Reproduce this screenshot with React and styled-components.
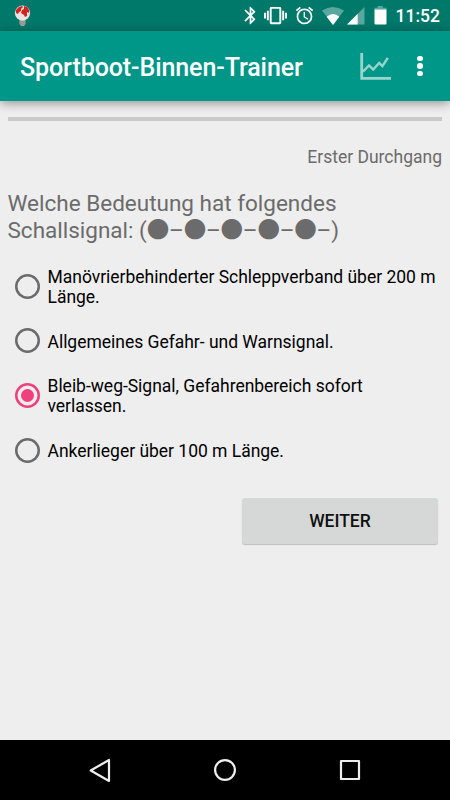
import React from 'react';
import styled, { createGlobalStyle } from 'styled-components';
import { MdBluetooth, MdVibration, MdAlarm } from 'react-icons/md';

const answers = [
  'Manövrierbehinderter Schleppverband über 200 m Länge.',
  'Allgemeines Gefahr- und Warnsignal.',
  'Bleib-weg-Signal, Gefahrenbereich sofort verlassen.',
  'Ankerlieger über 100 m Länge.',
];

const BulbIcon = () => (
  <svg width="18" height="22" viewBox="0 0 18 22">
    <path d="M5.5 14h6v5l-1.5 2H7l-1.500-2z" fill="#a9aaa7" />
    <path d="M6 17h5M6 19h5" stroke="#7d8582" strokeWidth="0.8" />
    <circle cx="8.5" cy="8" r="7.6" fill="#e9e4e2" />
    <path
      d="M2 5 5 2l3-1 1 1-2 2v2L5 7 4 9 2 8zM10 1l3 1 2 3v3l-2-1v4l-2 1-1-2-3-2 1-3 2-1z"
      fill="#d3221f"
    />
  </svg>
);

const WifiIcon = () => (
  <svg width="22" height="18" viewBox="0 0 22 18">
    <path d="M0 3.5Q11-3.5 22 3.5L11 18z" fill="#fff" opacity="0.35" />
    <path d="M4.7 9.7Q11 4.2 17.3 9.7L11 18z" fill="#fff" />
  </svg>
);

const SignalIcon = () => (
  <svg width="18" height="18" viewBox="0 0 18 18">
    <path d="M17.5 0v17.5H0z" fill="#fff" opacity="0.35" />
    <path d="M10.7 6.8v10.7H0z" fill="#fff" />
  </svg>
);

const BatteryIcon = () => (
  <svg width="13" height="19" viewBox="0 0 13 19">
    <path d="M3.7 0h5v1.8H12.5v2H.5v-2h3.2z" fill="#fff" opacity="0.35" />
    <path d="M.5 3.6h12v14a1 1 0 0 1-1 1h-10a1 1 0 0 1-1-1z" fill="#fff" />
  </svg>
);

const ChartIcon = () => (
  <svg width="32" height="28" viewBox="0 0 32 28" fill="none" stroke="#99d5cf">
    <path d="M1.7 0v25.3H31" strokeWidth="2.8" />
    <path d="m3 18.6 6-6.2 4.2 4.2 6-6.6 3.2 3.2 5.4-8.4" strokeWidth="2.4" />
  </svg>
);

export default function App() {
  const [selected, setSelected] = React.useState(2);

  return (
    <Screen>
      <GlobalStyle />
      <StatusBar>
        <BulbIcon />
        <StatusIcons>
          <MdBluetooth size={21} />
          <MdVibration size={23} />
          <MdAlarm size={21} />
          <WifiIcon />
          <SignalIcon />
          <BatteryIcon />
        </StatusIcons>
        <Clock>11:52</Clock>
      </StatusBar>

      <Toolbar>
        <h1>Sportboot-Binnen-Trainer</h1>
        <ChartIcon />
        <MenuDots>
          <i />
          <i />
          <i />
        </MenuDots>
      </Toolbar>

      <Content>
        <Progress />
        <Round>Erster Durchgang</Round>
        <Question>
          Welche Bedeutung hat folgendes
          <br />
          Schallsignal: (<Signal>●–●–●–●–●–</Signal>)
        </Question>
        <Answers>
          {answers.map((answer, index) => (
            <Answer key={answer} onClick={() => setSelected(index)}>
              <Radio $checked={index === selected} />
              <span>{answer}</span>
            </Answer>
          ))}
        </Answers>
        <NextButton type="button">WEITER</NextButton>
      </Content>

      <NavBar>
        <svg width="22" height="25" viewBox="0 0 22 25">
          <path d="M20 2v21L1.7 12.5z" />
        </svg>
        <svg width="24" height="24" viewBox="0 0 24 24">
          <circle cx="12" cy="12" r="9.9" />
        </svg>
        <svg width="22" height="22" viewBox="0 0 22 22">
          <rect x="2" y="2" width="18" height="18" />
        </svg>
      </NavBar>
    </Screen>
  );
}

const GlobalStyle = createGlobalStyle`
  * {
    box-sizing: border-box;
  }
  body {
    margin: 0;
    font-family: Roboto, 'Noto Sans CJK SC', sans-serif;
  }
`;

const Screen = styled.div`
  display: flex;
  flex-direction: column;
  width: 450px;
  height: 800px;
  overflow: hidden;
  background: #eee;
`;

const StatusBar = styled.header`
  display: flex;
  align-items: center;
  flex: none;
  height: 31px;
  padding: 0 10px 0 14px;
  background: #00786a;
  color: #fff;
`;

const StatusIcons = styled.div`
  display: flex;
  align-items: center;
  margin-left: auto;
  svg:nth-child(2) {
    margin-left: 3px;
  }
  svg:nth-child(3) {
    margin-left: 7px;
  }
  svg:nth-child(4) {
    margin-left: 7px;
  }
  svg:nth-child(5) {
    margin-left: 3px;
  }
  svg:nth-child(6) {
    margin-left: 9px;
  }
`;

const Clock = styled.span`
  margin-left: 9px;
  padding-top: 2px;
  font-size: 17.5px;
  font-weight: 500;
  line-height: 31px;
`;

const Toolbar = styled.div`
  display: flex;
  align-items: center;
  flex: none;
  height: 70px;
  padding: 2px 27px 0 20px;
  background: #009788;
  box-shadow: 0 2px 10px rgba(0, 0, 0, 0.4);
  h1 {
    flex: 1;
    margin: 0;
    color: #fff;
    font-size: 25px;
    font-weight: 500;
    letter-spacing: -0.09px;
  }
`;

const MenuDots = styled.div`
  display: flex;
  flex-direction: column;
  gap: 2px;
  margin: -2px 0 0 25px;
  i {
    width: 5.6px;
    height: 5.6px;
    border-radius: 50%;
    background: #fff;
  }
`;

const Content = styled.main`
  display: flex;
  flex-direction: column;
  flex: 1;
  padding: 16px 8px 0 7.5px;
`;

const Progress = styled.div`
  height: 4px;
  background: #c9c9c9;
`;

const Round = styled.p`
  margin: 26px 0 0;
  color: #6b6b6b;
  font-size: 17.5px;
  line-height: 21px;
  text-align: right;
`;

const Question = styled.h2`
  margin: 22px 0 0;
  color: #6b6b6b;
  font-size: 22.5px;
  font-weight: 400;
  line-height: 27px;
`;

const Signal = styled.span`
  letter-spacing: -0.2px;
  white-space: nowrap;
`;

const Answers = styled.div`
  margin-top: 15.5px;
`;

const Answer = styled.div`
  display: flex;
  align-items: center;
  height: 54.6px;
  padding-left: 7px;
  color: #000;
  font-size: 17.5px;
  letter-spacing: -0.02px;
  line-height: 20px;
  cursor: pointer;
  span:last-child {
    padding-top: 0.4px;
  }
`;

const Radio = styled.span`
  display: grid;
  place-items: center;
  flex: none;
  width: 25px;
  height: 25px;
  margin: -1px 8px 0 0;
  border-radius: 50%;
  box-shadow: inset 0 0 0 2.5px ${({ $checked }) => ($checked ? '#f0407c' : '#6b6b6b')};
  &::after {
    content: '';
    width: 13px;
    height: 13px;
    border-radius: 50%;
    background: ${({ $checked }) => ($checked ? '#f0407c' : 'transparent')};
  }
`;

const NextButton = styled.button`
  align-self: flex-end;
  width: 196px;
  height: 46px;
  margin: 20px 4px 0 0;
  padding: 0;
  border: 0;
  border-radius: 3px;
  background: #d6d8d7;
  box-shadow: 0 1px 1px rgba(0, 0, 0, 0.2);
  color: #111;
  font: 500 17.5px Roboto, sans-serif;
`;

const NavBar = styled.nav`
  display: flex;
  align-items: center;
  justify-content: space-between;
  flex: none;
  height: 60px;
  padding: 0 89px;
  background: #000;
  svg {
    fill: none;
    stroke: #eee;
    stroke-width: 2.2;
    stroke-linejoin: round;
  }
`;
